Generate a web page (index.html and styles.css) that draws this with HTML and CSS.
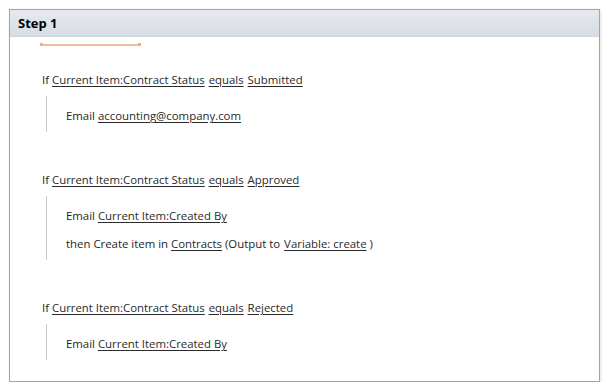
FILE: index.html
```html
<!DOCTYPE html>
<html>
<head>
<meta charset="utf-8">
<link rel="stylesheet" href="styles.css">
</head>
<body>
<div class="panel">
  <div class="header">Step 1</div>
  <div class="content">
    <div class="marker"><span class="cap"></span><span class="line"></span><span class="cap"></span></div>
    <div class="block">
      <div class="row">If <a>Current Item:Contract Status</a> <a>equals</a> <a>Submitted</a></div>
      <div class="actions">
        <div class="row">Email <a>accounting@company.com</a></div>
      </div>
    </div>
    <div class="block">
      <div class="row">If <a>Current Item:Contract Status</a> <a>equals</a> <a>Approved</a></div>
      <div class="actions">
        <div class="row">Email <a>Current Item:Created By</a></div>
        <div class="row">then Create item in <a>Contracts</a> (Output to <a>Variable: create</a> )</div>
      </div>
    </div>
    <div class="block">
      <div class="row">If <a>Current Item:Contract Status</a> <a>equals</a> <a>Rejected</a></div>
      <div class="actions">
        <div class="row">Email <a>Current Item:Created By</a></div>
      </div>
    </div>
  </div>
</div>
</body>
</html>
```
FILE: styles.css
```css
html, body {
  margin: 0;
  padding: 0;
  background: #ffffff;
}
body {
  font-family: "Open Sans", "Noto Sans", sans-serif;
  font-size: 11.4px;
  color: #1e1e1e;
}
.panel {
  margin: 9px 0 0 9px;
  width: 589px;
  height: 371px;
  border: 1px solid #a3a3a3;
  box-shadow: 1px 1px 3px rgba(0,0,0,0.12);
  background: #fff;
  box-sizing: content-box;
}
.header {
  height: 27px;
  line-height: 27px;
  padding-left: 8px;
  font-weight: bold;
  font-size: 13px;
  color: #000;
  background: linear-gradient(#e6e9ee, #d7dce4);
  border-bottom: 1px solid #d2d6dd;
  box-sizing: border-box;
}
.content {
  padding: 6px 0 0 32px;
}
.marker {
  display: flex;
  align-items: center;
  margin-left: -2px;
  width: 101px;
  height: 3px;
  margin-bottom: 26px;
}
.marker .cap {
  width: 3px;
  height: 3px;
  background: #f3ab84;
}
.marker .line {
  flex: 1;
  height: 2px;
  background: #f6bd9c;
}
.block {
  margin-bottom: 40px;
}
.row {
  height: 16px;
  line-height: 16px;
  white-space: nowrap;
}
.row a {
  color: #2a2a2a;
  text-decoration: underline;
  text-underline-offset: 2px;
}
.row a + a {
  margin-left: 1px;
}
.actions {
  margin: 8px 0 0 4px;
  border-left: 1px solid #c9c9cf;
  padding: 12px 0 8px 19px;
  display: flex;
  flex-direction: column;
  gap: 12px;
}
```
